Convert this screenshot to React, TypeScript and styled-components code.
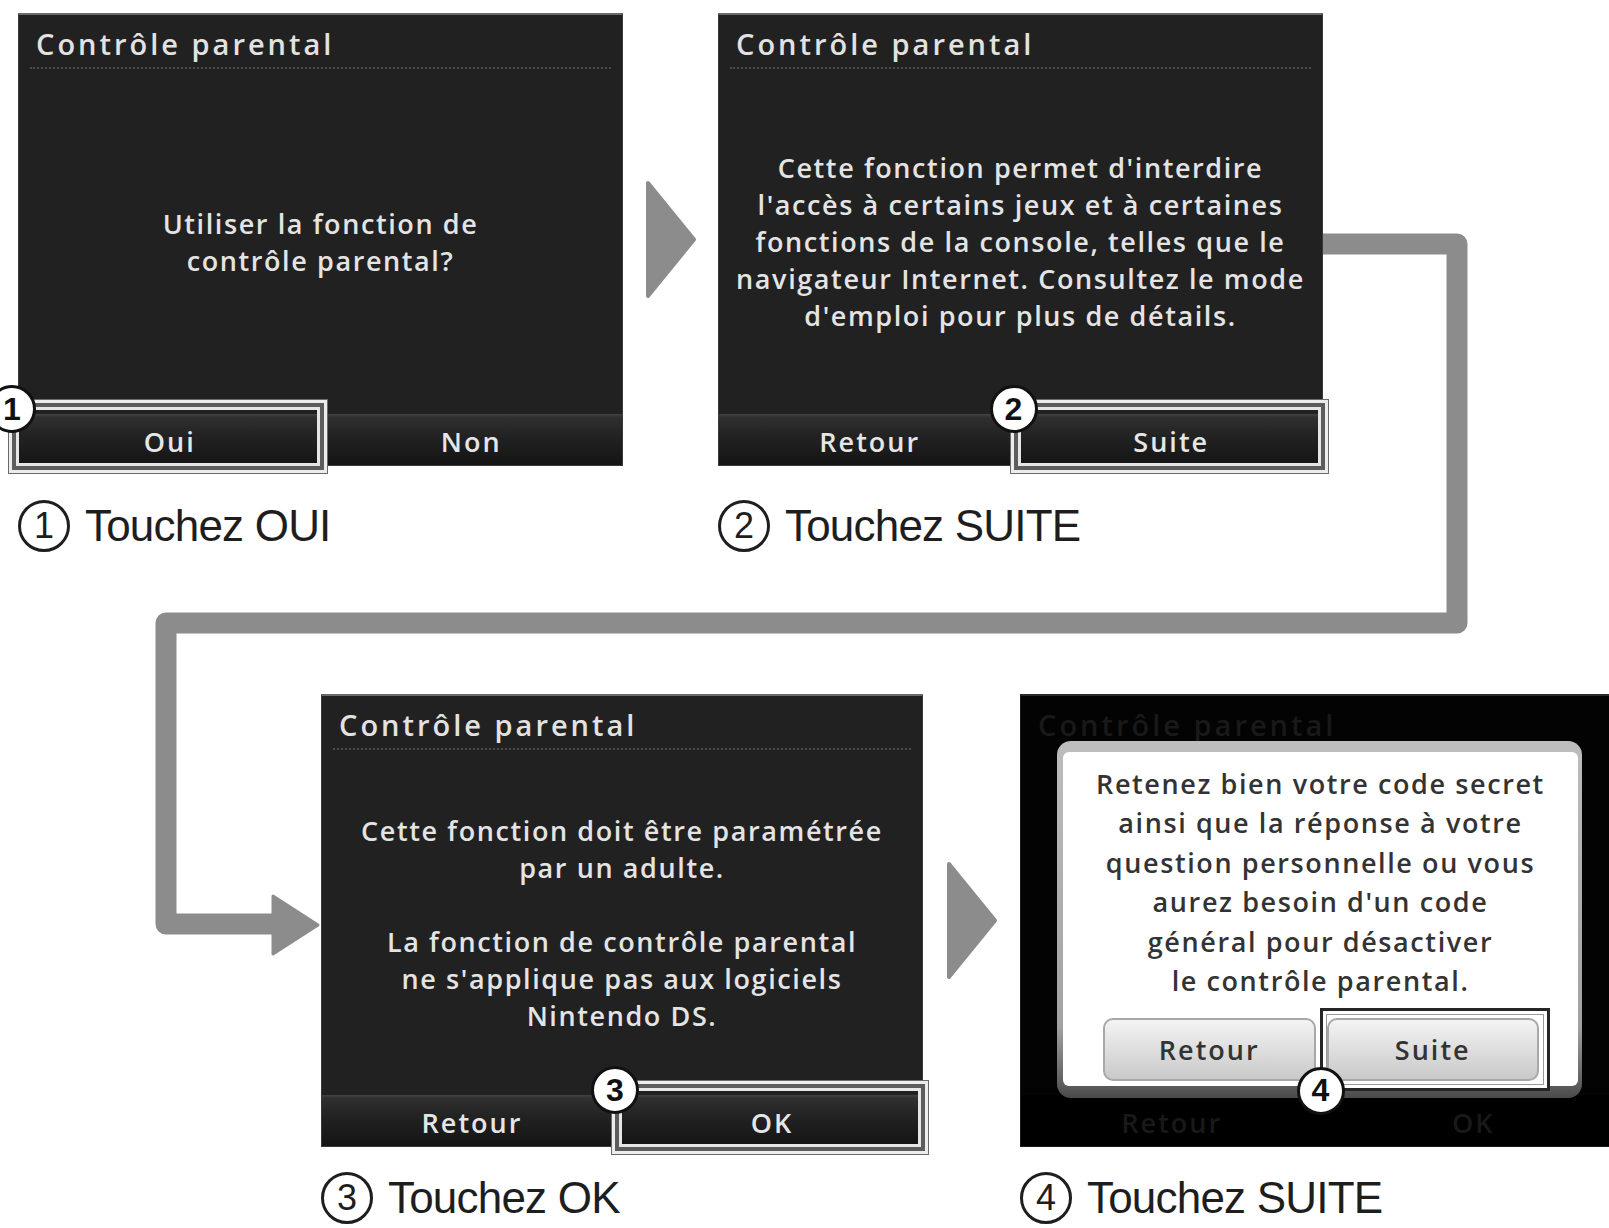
import React from "react";
import styled, {createGlobalStyle} from "styled-components";

const GlobalStyle = createGlobalStyle`
    html, body {
        margin: 0;
        padding: 0;
        background: #fff;
    }

    body {
        font-family: "Open Sans", "Liberation Sans", sans-serif;
    }
`

const Page = styled.div`
    position: relative;
    width: 1609px;
    height: 1228px;
    overflow: hidden;
    box-sizing: border-box;
    padding-top: 13px;
    background: #fff;
`

const Connector = styled.svg`
    position: absolute;
    left: 0;
    top: 0;
    pointer-events: none;
`

const StepRow = styled.div<{ $offset: number; $top: number }>`
    display: flex;
    align-items: flex-start;
    padding-left: ${p => p.$offset}px;
    margin-top: ${p => p.$top}px;
`

const Step = styled.div<{ $gap: number; $width: number }>`
    display: flex;
    flex-direction: column;
    gap: ${p => p.$gap}px;
    width: ${p => p.$width}px;
    flex: none;
`

const ArrowSlot = styled.div<{ $width: number }>`
    width: ${p => p.$width}px;
    height: 453px;
    flex: none;
    display: flex;
    align-items: center;
    justify-content: center;
`

const Screen = styled.div<{ $dim?: boolean }>`
    position: relative;
    height: 453px;
    box-sizing: border-box;
    display: flex;
    flex-direction: column;
    background: ${p => p.$dim ? '#030303' : '#212121'};
    border: 1px solid ${p => p.$dim ? '#1a1a1a' : '#3a3a3a'};
    border-top: 2px solid ${p => p.$dim ? '#2a2a2a' : '#6a6a6a'};
    color: #e4e4e4;
`

const ScreenHeader = styled.div<{ $dim?: boolean }>`
    height: 54px;
    box-sizing: border-box;
    margin: 0 11px;
    padding: 4px 0 0 6px;
    display: flex;
    align-items: center;
    border-bottom: 2px dotted ${p => p.$dim ? 'transparent' : '#4b4b4b'};
    font-size: 29px;
    font-weight: 600;
    letter-spacing: 3px;
    color: ${p => p.$dim ? '#191919' : '#e2e2e2'};
`

const ScreenBody = styled.div`
    flex: 1;
    display: flex;
    flex-direction: column;
    align-items: center;
    justify-content: center;
    text-align: center;
    font-size: 27px;
    font-weight: 600;
    line-height: 37px;
    letter-spacing: 1.6px;
    color: #e4e4e4;
`

const Paragraph = styled.p`
    margin: 0;

    & + & {
        margin-top: 37px;
    }
`

const ButtonBar = styled.div<{ $dim?: boolean }>`
    height: 51px;
    flex: none;
    display: flex;
    background: ${p => p.$dim
            ? '#000'
            : 'linear-gradient(#444 0, #303030 3px, #232323 40%, #141414 100%)'};
`

const BarButton = styled.div<{ $dim?: boolean }>`
    position: relative;
    flex: 1;
    display: flex;
    align-items: center;
    justify-content: center;
    padding-top: 4px;
    font-size: 27px;
    font-weight: 600;
    letter-spacing: 2px;
    color: ${p => p.$dim ? '#191919' : '#e6e6e6'};
`

const Frame = styled.div<{ $dark?: boolean; $inset: string }>`
    position: absolute;
    inset: ${p => p.$inset};
    z-index: 2;
    pointer-events: none;
    border: 3px solid ${p => p.$dark ? '#262626' : '#ececec'};
    box-shadow: ${p => p.$dark
            ? 'inset 0 0 0 3px #fff, inset 0 0 0 4px #9a9a9a'
            : '0 0 0 1px #6a6a6a, inset 0 0 0 4px #5c5c5c, inset 0 0 0 7px #e6e6e6'};
`

const Badge = styled.span<{ $at: 'top' | 'bottom' }>`
    position: absolute;
    ${p => p.$at === 'top' ? 'left: -24px; top: -18px;' : 'left: -26px; bottom: -27px;'}
    width: 48px;
    height: 48px;
    box-sizing: border-box;
    border-radius: 50%;
    background: #fff;
    border: 3px solid #111;
    display: flex;
    align-items: center;
    justify-content: center;
    font-family: "Liberation Sans", Arial, sans-serif;
    font-size: 32px;
    font-weight: bold;
    letter-spacing: 0;
    color: #111;
`

const Dialog = styled.div`
    position: absolute;
    left: 36px;
    right: 42px;
    top: 45px;
    bottom: 48px;
    z-index: 1;
    display: flex;
    box-sizing: border-box;
    padding: 11px 4px 12px 6px;
    border-radius: 14px;
    background: linear-gradient(#bdbdbd, #a2a2a2 80%, #5e5e5e 96%, #4a4a4a);
`

const DialogPanel = styled.div`
    flex: 1;
    display: flex;
    flex-direction: column;
    padding: 12px 0 5px;
    border-radius: 6px;
    background: #fff;
    text-align: center;
    font-size: 27px;
    font-weight: 600;
    line-height: 39.4px;
    letter-spacing: 1.6px;
    color: #333;
`

const DialogButtons = styled.div`
    display: flex;
    gap: 11px;
    margin-top: auto;
    padding: 0 39px 0 40px;
`

const DialogButton = styled.div`
    position: relative;
    flex: 1;
    height: 63px;
    box-sizing: border-box;
    display: flex;
    align-items: center;
    justify-content: center;
    border: 2px solid #a8a8a8;
    border-radius: 10px;
    background: linear-gradient(#f4f4f4, #dcdcdc 55%, #c9c9c9);
    font-size: 27px;
    font-weight: 600;
    letter-spacing: 2px;
    color: #333;
`

const Caption = styled.div`
    display: flex;
    align-items: center;
    gap: 15px;
    height: 52px;
    font-family: "Liberation Sans", Arial, sans-serif;
    font-size: 44px;
    letter-spacing: -0.8px;
    color: #1e1e1e;
`

const CircleNum = styled.span`
    width: 52px;
    height: 52px;
    flex: none;
    box-sizing: border-box;
    border: 3px solid #1e1e1e;
    border-radius: 50%;
    display: flex;
    align-items: center;
    justify-content: center;
    font-size: 36px;
    letter-spacing: 0;
`

const GREY = '#8c8c8c'

function NextArrow() {
    return (
        <svg width="52" height="119" viewBox="0 0 52 119">
            <polygon points="3,3 49,59.5 3,116" fill={GREY} stroke={GREY} strokeWidth="4" strokeLinejoin="round"/>
        </svg>
    )
}

type Highlight = { index: number; badge: number }

function ConsoleScreen({lines, buttons, highlight}: {
    lines: string[][]
    buttons: string[]
    highlight: Highlight
}) {
    return (
        <Screen>
            <ScreenHeader>Contrôle parental</ScreenHeader>
            <ScreenBody>
                {lines.map((para, i) => (
                    <Paragraph key={i}>
                        {para.map((l, j) => <React.Fragment key={j}>{j > 0 && <br/>}{l}</React.Fragment>)}
                    </Paragraph>
                ))}
            </ScreenBody>
            <ButtonBar>
                {buttons.map((b, i) => (
                    <BarButton key={b}>
                        {b}
                        {highlight.index === i &&
                            <Frame $inset="-14px -6px -8px -10px">
                                <Badge $at="top">{highlight.badge}</Badge>
                            </Frame>}
                    </BarButton>
                ))}
            </ButtonBar>
        </Screen>
    )
}

function StepCaption({n, text}: { n: number; text: string }) {
    return (
        <Caption>
            <CircleNum>{n}</CircleNum>
            <span>{text}</span>
        </Caption>
    )
}

const dialogLines = [
    'Retenez bien votre code secret',
    'ainsi que la réponse à votre',
    'question personnelle ou vous',
    "aurez besoin d'un code",
    'général pour désactiver',
    'le contrôle parental.',
]

export default function App() {
    return (
        <>
            <GlobalStyle/>
            <Page>
                <Connector width="1609" height="1228" viewBox="0 0 1609 1228">
                    <path d="M1318 244 H1457 V623 H166 V924 H282" fill="none" stroke={GREY} strokeWidth="21"
                          strokeLinejoin="round"/>
                    <polygon points="273,896 318,925 273,954" fill={GREY} stroke={GREY} strokeWidth="3"
                             strokeLinejoin="round"/>
                </Connector>

                <StepRow $offset={18} $top={0}>
                    <Step $gap={34} $width={605}>
                        <ConsoleScreen
                            lines={[['Utiliser la fonction de', 'contrôle parental?']]}
                            buttons={['Oui', 'Non']}
                            highlight={{index: 0, badge: 1}}
                        />
                        <StepCaption n={1} text="Touchez OUI"/>
                    </Step>
                    <ArrowSlot $width={95}><NextArrow/></ArrowSlot>
                    <Step $gap={34} $width={605}>
                        <ConsoleScreen
                            lines={[[
                                "Cette fonction permet d'interdire",
                                "l'accès à certains jeux et à certaines",
                                'fonctions de la console, telles que le',
                                'navigateur Internet. Consultez le mode',
                                "d'emploi pour plus de détails.",
                            ]]}
                            buttons={['Retour', 'Suite']}
                            highlight={{index: 1, badge: 2}}
                        />
                        <StepCaption n={2} text="Touchez SUITE"/>
                    </Step>
                </StepRow>

                <StepRow $offset={321} $top={142}>
                    <Step $gap={25} $width={602}>
                        <ConsoleScreen
                            lines={[
                                ['Cette fonction doit être paramétrée', 'par un adulte.'],
                                ['La fonction de contrôle parental', "ne s'applique pas aux logiciels", 'Nintendo DS.'],
                            ]}
                            buttons={['Retour', 'OK']}
                            highlight={{index: 1, badge: 3}}
                        />
                        <StepCaption n={3} text="Touchez OK"/>
                    </Step>
                    <ArrowSlot $width={97}><NextArrow/></ArrowSlot>
                    <Step $gap={25} $width={605}>
                        <Screen $dim>
                            <ScreenHeader $dim>Contrôle parental</ScreenHeader>
                            <ScreenBody/>
                            <ButtonBar $dim>
                                <BarButton $dim>Retour</BarButton>
                                <BarButton $dim>OK</BarButton>
                            </ButtonBar>
                            <Dialog>
                                <DialogPanel>
                                    {dialogLines.map(l => <div key={l}>{l}</div>)}
                                    <DialogButtons>
                                        <DialogButton>Retour</DialogButton>
                                        <DialogButton>
                                            Suite
                                            <Frame $dark $inset="-12px -13px -12px -9px">
                                                <Badge $at="bottom">4</Badge>
                                            </Frame>
                                        </DialogButton>
                                    </DialogButtons>
                                </DialogPanel>
                            </Dialog>
                        </Screen>
                        <StepCaption n={4} text="Touchez SUITE"/>
                    </Step>
                </StepRow>
            </Page>
        </>
    )
}
